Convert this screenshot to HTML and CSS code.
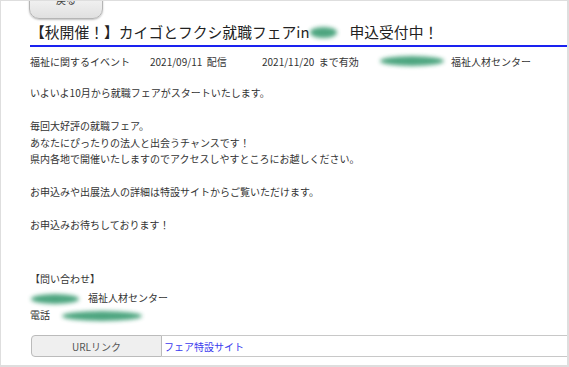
FILE: index.html
```html
<!DOCTYPE html>
<html lang="ja">
<head>
<meta charset="utf-8">
<link rel="stylesheet" href="styles.css">
</head>
<body>
<div class="frame">
  <div class="back-wrap"><button class="back">戻る</button></div>
  <h1 class="title">【秋開催！】カイゴとフクシ就職フェアin<span class="blob blob-title"></span>申込受付中！</h1>
  <div class="meta">
    <span class="cat">福祉に関するイベント</span>
    <span class="date">2021/09/11&nbsp;&nbsp;配信</span>
    <span class="valid">2021/11/20&nbsp;&nbsp;まで有効</span>
    <span class="blob blob-meta"></span>
    <span class="org">福祉人材センター</span>
  </div>
  <div class="body">
    <p>いよいよ10月から就職フェアがスタートいたします。</p>
    <p class="gap">毎回大好評の就職フェア。<br>あなたにぴったりの法人と出会うチャンスです！<br>県内各地で開催いたしますのでアクセスしやすところにお越しください。</p>
    <p class="gap">お申込みや出展法人の詳細は特設サイトからご覧いただけます。</p>
    <p class="gap">お申込みお待ちしております！</p>
    <p class="gap3">【問い合わせ】</p>
    <p class="contact first"><span class="blob blob-name"></span>福祉人材センター</p>
    <p class="contact">電話<span class="blob blob-tel"></span></p>
  </div>
  <div class="link-row">
    <div class="link-label">URLリンク</div>
    <div class="link-value"><a href="#">フェア特設サイト</a></div>
  </div>
</div>
</body>
</html>
```
FILE: styles.css
```css
* { box-sizing: border-box; }
html, body { margin: 0; padding: 0; background: #fff; }
body {
  font-family: "Noto Sans CJK JP", "Noto Sans", sans-serif;
  color: #333;
}
.frame {
  width: 569px;
  height: 367px;
  border: 1px solid #dedede;
  border-right-width: 2px;
  border-bottom-width: 2px;
  overflow: hidden;
  display: flex;
  flex-direction: column;
}
.back-wrap {
  padding-left: 28px;
  height: 18px;
  display: flex;
  align-items: flex-end;
}
.back {
  display: block;
  flex: none;
  width: 74px;
  height: 30px;
  border: 1px solid #b5b5b5;
  border-radius: 10px;
  background: linear-gradient(#fafafa, #e0e0e0);
  box-shadow: 0 1px 2px rgba(0,0,0,0.25);
  font-family: inherit;
  font-size: 10px;
  color: #444;
  padding: 0 0 9px;
  line-height: 12px;
}
.title {
  margin: 0 0 0 29px;
  font-size: 14.8px;
  font-weight: normal;
  line-height: 20px;
  padding: 3px 0 3px 0;
  color: #222;
  border-bottom: 2px solid #1a22f0;
  display: flex;
  align-items: center;
}
.blob {
  display: inline-block;
  background: #3a9c72;
  border-radius: 50%;
  filter: blur(2px);
  opacity: 0.9;
}
.blob-title { width: 27px; height: 11px; margin: 0 12px 0 1px; }
.meta {
  margin-left: 29px;
  display: flex;
  align-items: center;
  font-size: 10px;
  height: 28px;
  color: #333;
}
.cat { width: 120px; }
.date { width: 112px; }
.valid { width: 118px; }
.blob-meta { width: 64px; height: 10px; margin-right: 7px; }
.body {
  margin-left: 29px;
  font-size: 10px;
  line-height: 16.5px;
  padding-top: 10px;
  color: #333;
  flex: 1;
}
.body p { margin: 0; }
.body .gap { margin-top: 16.5px; }
.body .gap3 { margin-top: 37px; }
.body .contact { display: flex; align-items: center; height: 17px; }
.body .contact.first { height: 20px; padding-top: 3px; }
.blob-name { width: 48px; height: 10px; margin: 0 9px 0 1px; }
.blob-tel { width: 80px; height: 10px; margin-left: 12px; }
.link-row {
  margin: 0 0 8px 30px;
  display: flex;
  height: 22px;
  font-size: 10px;
}
.link-label {
  width: 131px;
  background: #efefef;
  border: 1px solid #bbb;
  border-radius: 4px 0 0 4px;
  display: flex;
  align-items: center;
  justify-content: center;
  color: #555;
}
.link-value {
  flex: 1;
  border-top: 1px solid #c8c8c8;
  border-bottom: 1px solid #c8c8c8;
  display: flex;
  align-items: center;
  padding-left: 2px;
}
.link-value a { color: #3b3bee; text-decoration: none; }
```
